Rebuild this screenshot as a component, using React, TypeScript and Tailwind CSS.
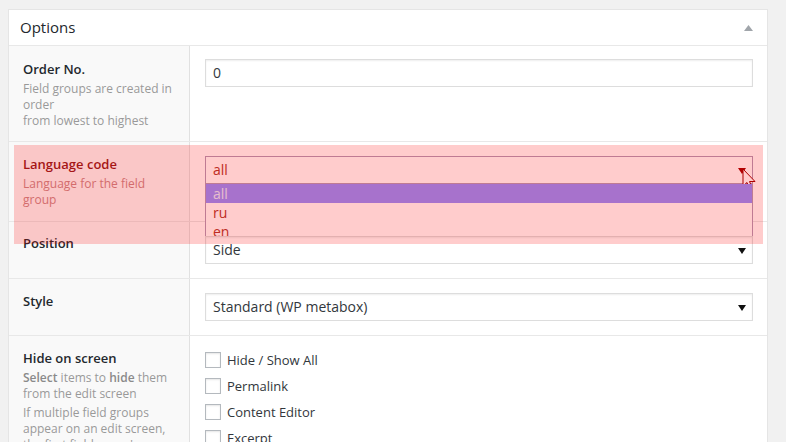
import React from "react";

const font = { fontFamily: '"Open Sans", "Liberation Sans", sans-serif' };

const Arrow = ({ color = "#111" }: { color?: string }) => (
  <svg width="8" height="6" viewBox="0 0 8 6" className="absolute right-[6px] top-[11px]">
    <path d="M0 0H8L4 6Z" fill={color} />
  </svg>
);

const Row: React.FC<{
  label: React.ReactNode;
  labelClass?: string;
  leftPad?: string;
  rightPad?: string;
  desc?: React.ReactNode;
  children: React.ReactNode;
}> = ({ label, labelClass = "text-[#23282d]", leftPad = "pt-[12px] pb-[12px]", rightPad = "pt-[14px]", desc, children }) => (
  <div className="flex border-t border-[#e8e8e8]">
    <div className={`w-[181px] shrink-0 bg-[#f9f9f9] border-r border-[#e1e1e1] pl-[14px] pr-[10px] ${leftPad}`}>
      <div className={`text-[13px] font-semibold leading-[20px] ${labelClass}`}>{label}</div>
      {desc}
    </div>
    <div className={`flex-1 pl-[15px] pr-[14px] pb-[14px] ${rightPad}`}>{children}</div>
  </div>
);

const FakeSelect: React.FC<{ value: string }> = ({ value }) => (
  <div className="relative h-[28px] border border-[#dddddd] bg-white shadow-[inset_0_1px_2px_rgba(0,0,0,0.07)] pl-[7px] text-[14px] leading-[26px] text-[#32373c]">
    {value}
    <Arrow />
  </div>
);

const checks = ["Hide / Show All", "Permalink", "Content Editor", "Excerpt", "Discussion", "Comments"];

export default function App() {
  return (
    <div style={font} className="relative h-[442px] overflow-hidden bg-[#f1f1f1] pl-[8px] pt-[9px] pr-[18px]">
      <div className="border border-[#e5e5e5] bg-white">
        <div className="flex h-[35px] items-center justify-between pl-[11px] pr-[14px]">
          <span className="text-[15px] text-[#23282d]">Options</span>
          <svg width="9" height="6" viewBox="0 0 9 6">
            <path d="M0 6H9L4.5 0Z" fill="#a0a5aa" />
          </svg>
        </div>

        <Row
          label="Order No."
          leftPad="pt-[13px] pb-[12px]"
          rightPad="pt-[13px]"
          desc={
            <p className="mt-[2px] text-[12px] leading-[16px] text-[#999999]">
              Field groups are created in order
              <br />
              from lowest to highest
            </p>
          }
        >
          <div className="h-[28px] border border-[#dddddd] shadow-[inset_0_1px_2px_rgba(0,0,0,0.07)] pl-[7px] text-[14px] leading-[26px] text-[#32373c]">
            0
          </div>
        </Row>

        <Row
          label="Language code"
          labelClass="text-[#8f1c1c]"
          leftPad="pt-[12px] pb-[13px]"
          desc={
            <p className="mt-[2px] text-[12px] leading-[16px] text-[#c88888]">Language for the field group</p>
          }
        >
          <div className="relative">
            <div className="relative h-[28px] border border-[#b09ab8] bg-white pl-[7px] text-[14px] leading-[26px] text-[#ae382c]">
              all
              <Arrow color="#a00000" />
              <svg width="14" height="24" viewBox="0 0 14 24" className="absolute left-[536px] top-[11px]">
                <path
                  d="M1 1V18L5 14.5L8 21.5L10.5 20.5L7.5 13.5H13Z"
                  fill="#fff"
                  stroke="#990000"
                  strokeWidth="1"
                  strokeLinejoin="miter"
                />
              </svg>
            </div>
            <div className="absolute left-0 right-0 top-[28px] border border-t-0 border-[#b09ab8] bg-white text-[14px] leading-[19px] text-[#ae382c]">
              <div className="bg-[#928fff] pl-[7px] text-[#e2ecff]">all</div>
              <div className="pl-[7px]">ru</div>
              <div className="pl-[7px]">en</div>
            </div>
          </div>
        </Row>

        <Row label="Position" leftPad="pt-[11px] pb-[12px]">
          <FakeSelect value="Side" />
        </Row>

        <Row label="Style">
          <FakeSelect value="Standard (WP metabox)" />
        </Row>

        <Row
          label="Hide on screen"
          rightPad="pt-[16px]"
          desc={
            <div className="mt-[2px] text-[12px] leading-[16px] text-[#999999]">
              <p>
                <b className="font-semibold text-[#8a8a8a]">Select</b> items to{" "}
                <b className="font-semibold text-[#8a8a8a]">hide</b> them from the edit screen
              </p>
              <p className="mt-[3px]">
                If multiple field groups appear on an edit screen, the first field group's options will be used
              </p>
            </div>
          }
        >
          <div className="flex flex-col gap-[10px]">
            {checks.map((c) => (
              <label key={c} className="flex items-center gap-[6px] text-[13px] leading-[16px] text-[#32373c]">
                <span className="h-[16px] w-[16px] border border-[#b4b9be] bg-white shadow-[inset_0_1px_2px_rgba(0,0,0,0.1)]" />
                {c}
              </label>
            ))}
          </div>
        </Row>
      </div>

      <div className="pointer-events-none absolute left-[14px] top-[145px] h-[99px] w-[749px] bg-[rgba(255,0,0,0.2)]" />
    </div>
  );
}
